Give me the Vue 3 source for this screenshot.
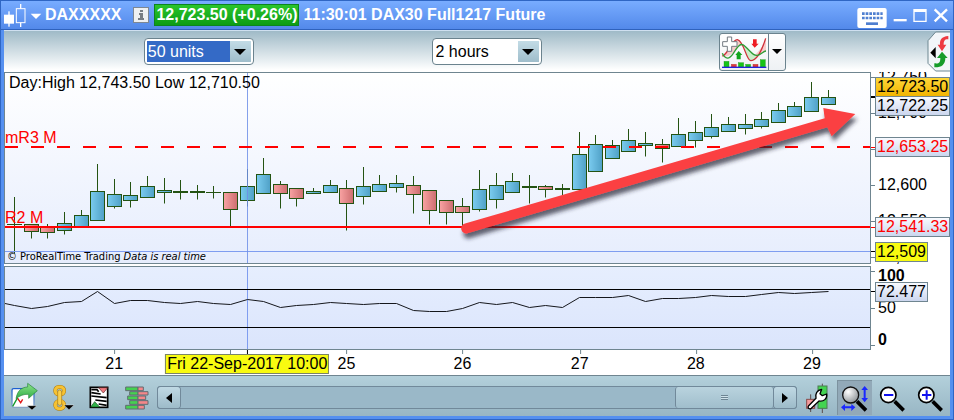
<script setup>
import { ref } from 'vue'

const units = ref('50 units')
const timeframe = ref('2 hours')
const scroll = ref(100)

// Plot geometry: both panels share one horizontal axis.
const PLOT_LEFT = 5
const PLOT_WIDTH = 865
const AXIS_TOP = 72
const RSI_TOP = 266

const priceY = (price) => 77 + (12750 - price) * 0.72
const left = (x) => `${((x - PLOT_LEFT) / PLOT_WIDTH) * 100}%`

// x, high, body top, body bottom, low, direction
const candles = [
  [14, 197, 224, 224, 253, 'up'],
  [31, 224, 224, 231, 238, 'down'],
  [47, 224, 227, 232, 238, 'down'],
  [64, 212, 223, 230, 234, 'up'],
  [81, 210, 215, 226, 226, 'up'],
  [97, 164, 191, 220, 220, 'up'],
  [114, 179, 194, 206, 208, 'up'],
  [130, 182, 195, 200, 207, 'up'],
  [147, 176, 186, 197, 197, 'up'],
  [164, 178, 190, 192, 203, 'up'],
  [180, 180, 191, 192, 199, 'up'],
  [197, 185, 191, 192, 199, 'up'],
  [213, 186, 192, 192, 198, 'up'],
  [230, 192, 192, 209, 226, 'down'],
  [247, 169, 186, 200, 206, 'up'],
  [263, 158, 174, 193, 193, 'up'],
  [280, 181, 184, 193, 208, 'down'],
  [296, 188, 188, 198, 206, 'down'],
  [313, 188, 191, 193, 193, 'up'],
  [330, 180, 185, 192, 192, 'up'],
  [346, 180, 188, 203, 230, 'down'],
  [363, 167, 186, 196, 204, 'up'],
  [379, 175, 184, 191, 191, 'up'],
  [396, 175, 183, 187, 192, 'up'],
  [413, 176, 185, 194, 213, 'down'],
  [429, 190, 190, 210, 224, 'down'],
  [446, 200, 200, 212, 224, 'down'],
  [462, 198, 206, 212, 226, 'down'],
  [479, 170, 189, 209, 211, 'up'],
  [496, 173, 185, 199, 208, 'up'],
  [512, 173, 181, 192, 192, 'up'],
  [529, 175, 186, 187, 203, 'up'],
  [545, 185, 186, 189, 197, 'down'],
  [562, 184, 188, 189, 195, 'up'],
  [579, 132, 154, 189, 189, 'up'],
  [595, 135, 144, 171, 171, 'up'],
  [612, 140, 145, 158, 158, 'up'],
  [628, 129, 140, 151, 151, 'up'],
  [645, 132, 143, 145, 156, 'up'],
  [662, 139, 144, 148, 162, 'down'],
  [678, 118, 134, 146, 146, 'up'],
  [695, 121, 132, 140, 147, 'up'],
  [711, 114, 127, 136, 138, 'up'],
  [728, 117, 124, 131, 131, 'up'],
  [745, 114, 124, 128, 134, 'up'],
  [761, 112, 119, 126, 128, 'up'],
  [778, 103, 110, 122, 122, 'up'],
  [794, 102, 106, 116, 116, 'up'],
  [811, 82, 97, 111, 111, 'up'],
  [828, 90, 97, 104, 104, 'up'],
].map(([x, high, top, bottom, low, dir]) => ({ x, high, top, bottom, low, dir }))

const rsi = [
  303, 305, 308, 306, 302, 301, 291, 303, 300, 300, 302, 303, 301, 303, 304, 299, 301, 307, 305,
  304, 302, 303, 304, 303, 303, 310, 311, 311, 308, 302, 304, 302, 307, 305, 307, 297, 297, 297,
  295, 301, 298, 298, 297, 295, 296, 296, 294, 292, 293, 292, 291,
]
const rsiPoints = rsi
  .map((y, i) => `${i === 0 ? 5 : candles[i - 1].x + 0.5},${y + 0.5}`)
  .join(' ')

const priceTicks = [12750, 12700, 12650, 12600, 12550, 12500]
const priceTags = [
  { text: '12,722.25', y: 106, kind: 'pale' },
  { text: '12,723.50', y: 87, kind: 'gold' },
  { text: '12,653.25', y: 147, kind: 'pale level' },
  { text: '12,541.33', y: 227, kind: 'pale level' },
  { text: '12,509', y: 252, kind: 'yellow' },
]
const dates = [
  { text: '21', x: 114 },
  { text: '', x: 230 },
  { text: '25', x: 346 },
  { text: '26', x: 462 },
  { text: '27', x: 579 },
  { text: '28', x: 695 },
  { text: '29', x: 811 },
]
</script>

<template>
  <main class="window">
    <header class="titlebar">
      <button class="plain" aria-label="Chart type">
        <svg width="38" height="28" viewBox="12 3 114 84">
          <g fill="#fff">
            <rect x="12" y="44" width="30" height="27" />
            <rect x="25" y="34" width="4" height="46" />
            <rect x="60" y="12" width="4" height="14" />
            <rect x="60" y="68" width="4" height="13" />
            <path d="M92 41H124L108 57Z" />
          </g>
          <rect x="49" y="26" width="26" height="42" fill="none" stroke="#fff" stroke-width="3" />
        </svg>
      </button>
      <h1 class="symbol">DAXXXXX</h1>
      <button class="info" aria-label="Information">
        <svg width="14" height="14" viewBox="0 0 14 14">
          <path d="M6 2h3v2H6zM5 5h4v5h1v2H4v-2h2V7H5z" fill="#777d84" />
        </svg>
      </button>
      <span class="quote">12,723.50 (+0.26%)</span>
      <span class="instrument">11:30:01 DAX30 Full1217 Future</span>
      <div class="controls">
        <button class="plain keyboard" aria-label="Keyboard">
          <svg width="30" height="28" viewBox="651 3 90 84">
            <rect x="652" y="24" width="88" height="60" rx="6" fill="#fff" />
            <path
              d="M666 41H728M666 54H728"
              stroke="#4f7fd0"
              stroke-width="8"
              stroke-dasharray="8 3"
            />
            <rect x="678" y="67" width="36" height="8" fill="#4f7fd0" />
          </svg>
        </button>
        <button class="plain" aria-label="Minimize">
          <svg width="17" height="28" viewBox="756 3 51 84">
            <rect x="761" y="57" width="39" height="7" fill="#fff" />
          </svg>
        </button>
        <button class="plain" aria-label="Maximize">
          <svg width="19" height="28" viewBox="813 3 57 84">
            <path
              fill="#fff"
              fill-rule="evenodd"
              d="M820 27H860V66H820ZM824 36V62H856V36Z"
            />
          </svg>
        </button>
        <button class="plain" aria-label="Close">
          <svg width="17" height="28" viewBox="873 3 51 84">
            <path d="M881 28L918 64M918 28L881 64" stroke="#fff" stroke-width="7" />
          </svg>
        </button>
      </div>
    </header>

    <section class="toolbar">
      <div class="combo focused first">
        <select v-model="units" aria-label="Units">
          <option>50 units</option>
          <option>100 units</option>
        </select>
        <span class="drop"><svg width="12" height="6" viewBox="0 0 12 6"><path d="M0 0H12L6 6Z" /></svg></span>
      </div>
      <div class="combo second">
        <select v-model="timeframe" aria-label="Timeframe">
          <option>2 hours</option>
          <option>4 hours</option>
        </select>
        <span class="drop"><svg width="12" height="6" viewBox="0 0 12 6"><path d="M0 0H12L6 6Z" /></svg></span>
      </div>
      <div class="split third">
        <button aria-label="Add indicator">
          <svg width="48" height="36" viewBox="240 98 144 108">
            <path d="M248 164C262 150 276 114 292 115C312 118 318 172 332 178C354 178 366 140 378 111V148C366 154 358 164 344 162C330 158 316 128 306 130C288 138 270 174 248 160Z" fill="#c9eec9" />
            <path d="M248 164C262 152 276 114 292 115L306 128C288 138 270 174 248 164ZM344 162C362 144 370 130 378 111V148C366 154 358 164 344 162Z" fill="#f7cccc" />
            <path d="M247 164C264 160 276 114 292 115C312 118 318 176 332 178C354 178 368 140 377 111" fill="none" stroke="#d02f3a" stroke-width="4" />
            <path d="M247 156C256 176 268 174 280 156C292 136 302 122 314 134C334 152 340 164 352 162C364 160 368 150 378 149" fill="none" stroke="#2f9c35" stroke-width="4" />
            <path d="M262 107H275V121H291V135H275V150H262V135H248V121H262Z" fill="#fff" stroke="#747b82" stroke-width="3" />
            <path d="M339 114H350V127H356L344 139L334 127H339Z" fill="#ee1c24" />
            <path d="M296 149L307 161H302V174H290V161H286Z" fill="#12a51c" />
            <g fill="#16c416" stroke="#168a16" stroke-width="1">
              <rect x="252" y="180" width="15" height="17" />
              <rect x="295" y="184" width="16" height="13" />
              <rect x="317" y="189" width="15" height="8" />
              <rect x="361" y="175" width="15" height="22" />
            </g>
            <g fill="#e03a3a" stroke="#a41818" stroke-width="1">
              <rect x="274" y="189" width="15" height="8" />
              <rect x="339" y="189" width="15" height="8" />
            </g>
            <rect x="246" y="196" width="133" height="4" fill="#2222dd" />
          </svg>
        </button>
        <button class="more" aria-label="More indicators">
          <svg width="10" height="6" viewBox="0 0 10 6"><path d="M0 0H10L5 5Z" /></svg>
        </button>
      </div>
      <button class="plain tab" aria-label="Order panel">
        <svg width="23" height="41" viewBox="861 93 69 123">
          <path d="M932 96H887L864 122V190L887 213H932Z" fill="#f2f6f9" stroke="#6f8892" stroke-width="3" />
          <path d="M871 158L887 141V175Z" />
          <path d="M925 108C904 110 899 119 900 134H893L906 154L919 134H911C911 123 914 117 925 118Z" fill="#ee3b42" />
          <path d="M883 202C903 203 916 195 916 174H923L906 155L891 174H901C901 188 897 192 883 190Z" fill="#169c2a" />
        </svg>
      </button>
    </section>

    <section class="charts">
      <div class="panel price">
        <svg class="plot" height="190" viewBox="5 73 865 190" preserveAspectRatio="none">
          <defs>
            <linearGradient id="up">
              <stop offset="0" stop-color="#7bccf0" />
              <stop offset="1" stop-color="#4fa0c6" />
            </linearGradient>
            <linearGradient id="down">
              <stop offset="0" stop-color="#f9a3a3" />
              <stop offset="1" stop-color="#cc6d6f" />
            </linearGradient>
            <filter id="shade" x="-5%" y="-10%" width="110%" height="130%">
              <feDropShadow dx="2" dy="5" stdDeviation="2" flood-color="#223" flood-opacity="0.7" />
            </filter>
          </defs>
          <g stroke="#245312">
            <g v-for="c in candles" :key="c.x">
              <path :d="`M${c.x + 0.5} ${c.high}V${c.low + 0.5}`" />
              <path v-if="c.bottom - c.top < 1" :d="`M${c.x - 7} ${c.top + 0.5}H${c.x + 8}`" />
              <rect
                v-else
                :x="c.x - 6.5"
                :y="c.top + 0.5"
                width="14"
                :height="c.bottom - c.top"
                :fill="`url(#${c.dir})`"
              />
            </g>
          </g>
          <path d="M5 251.5H870" stroke="#7f9df0" />
          <path d="M247.5 73V263" stroke="#6f8fe8" stroke-opacity="0.85" />
          <path d="M5 147H870" stroke="#f00" stroke-width="2" stroke-dasharray="13 13" />
          <path d="M5 227H870" stroke="#f00" stroke-width="2" />
          <path
            d="M465 223.500L824.700 118.300L823.300 108L855.300 114L831.700 136.300L827.300 127.300L467.500 233.300A5 5 0 0 1 465 223.500Z"
            fill="#fb4143"
            filter="url(#shade)"
          />
        </svg>
        <p class="range">Day:High 12,743.50 Low 12,710.50</p>
        <span class="level-name upper">mR3 M</span>
        <span class="level-name lower">R2 M</span>
        <p class="credit">© ProRealTime Trading <i>Data is real time</i></p>
      </div>
      <div class="axis">
        <svg class="ticks" width="5" height="190" viewBox="870 73 5 190">
          <path v-for="t in priceTicks" :key="t" :d="`M870 ${priceY(t) + 0.5}h4`" stroke="#6b828d" />
          <path d="M870 97h5" stroke="#000" stroke-width="2" />
          <path d="M870 147.500h5M870 227.500h5" stroke="#f00" />
          <path d="M870 251.500h5" stroke="#000" />
        </svg>
        <span
          v-for="t in priceTicks"
          :key="t"
          class="mark"
          :style="{ top: `${priceY(t) - AXIS_TOP}px` }"
        >{{ t.toLocaleString('en-US') }}</span>
        <span
          v-for="t in priceTags"
          :key="t.text"
          class="tag"
          :class="t.kind"
          :style="{ top: `${t.y - AXIS_TOP}px` }"
        >{{ t.text }}</span>
      </div>

      <div class="panel rsi">
        <svg class="plot" height="82" viewBox="5 267 865 82" preserveAspectRatio="none">
          <path d="M247.500 267V349" stroke="#7f9df0" />
          <path d="M5 289.500H870M5 327.500H870" stroke="#000" />
          <polyline :points="rsiPoints" fill="none" stroke="#15171c" />
        </svg>
      </div>
      <div class="axis">
        <svg class="ticks" width="5" height="82" viewBox="870 267 5 82">
          <path d="M870 271.500h4M870 308.500h4M870 345.500h4" stroke="#6b828d" />
          <path d="M870 291.500h5" stroke="#000" />
        </svg>
        <b class="mark" :style="{ top: `${276 - RSI_TOP}px` }">100</b>
        <span class="mark" :style="{ top: `${308 - RSI_TOP}px` }">50</span>
        <b class="mark" :style="{ top: `${340 - RSI_TOP}px` }">0</b>
        <span class="tag pale" :style="{ top: `${292 - RSI_TOP}px` }">72.477</span>
      </div>

      <div class="dates">
        <span v-for="d in dates" :key="d.x" class="date" :style="{ left: left(d.x) }">{{ d.text }}</span>
        <span class="date cursor" :style="{ left: left(247) }"><time>Fri 22-Sep-2017 10:00</time></span>
      </div>
    </section>

    <footer class="bottombar">
      <div class="tools">
        <button class="plain" aria-label="Export chart">
          <svg width="28" height="35" viewBox="30 360 84 105">
            <defs>
              <linearGradient id="frame" x2="0" y2="1">
                <stop offset="0" stop-color="#1c5fd0" />
                <stop offset="1" stop-color="#8aa5c6" />
              </linearGradient>
              <linearGradient id="share" x2="0" y2="1">
                <stop offset="0" stop-color="#8fe38b" />
                <stop offset="1" stop-color="#2fae46" />
              </linearGradient>
            </defs>
            <rect x="36" y="386" width="66" height="56" rx="5" fill="#fff" stroke="url(#frame)" stroke-width="4" />
            <path d="M38 439L53 413" fill="none" stroke="#119a2a" stroke-width="4" />
            <path d="M53 415L62 428L68 418" fill="none" stroke="#e01818" stroke-width="4" />
            <path d="M48 416C52 394 62 382 83 381V370L112 392L86 415V403C70 402 60 407 48 416Z" fill="url(#share)" stroke="#24833a" stroke-width="2" />
            <path d="M81 437H110L96 450Z" stroke="#fff" stroke-width="1" />
          </svg>
        </button>
        <button class="plain" aria-label="Link windows">
          <svg width="22" height="35" viewBox="158 360 66 105">
            <g fill="none" stroke="#a87a14" stroke-width="12">
              <rect x="168" y="381" width="26" height="22" rx="10" />
              <rect x="168" y="424" width="26" height="22" rx="10" />
            </g>
            <g fill="none" stroke="#f6c233" stroke-width="9">
              <rect x="168" y="381" width="26" height="22" rx="10" />
              <rect x="168" y="424" width="26" height="22" rx="10" />
            </g>
            <rect x="175" y="390" width="12" height="46" rx="6" fill="#f9d050" stroke="#a87a14" stroke-width="2" />
            <path d="M194 435H224L209 449Z" stroke="#fff" stroke-width="1" />
          </svg>
        </button>
        <button class="plain" aria-label="Order list">
          <svg width="22" height="35" viewBox="262 360 66 105">
            <rect x="269" y="382" width="52" height="60" fill="#fff" stroke="#000" stroke-width="5" />
            <path d="M294 383H321L308 399Z" fill="#f07a80" stroke="#5a2525" stroke-width="2" />
            <path d="M270 441L282 425L297 441Z" fill="#30b34a" stroke="#145020" stroke-width="2" />
            <path d="M272 389H289L294 395M272 398L300 402M272 408L318 413M284 420L318 424M294 432L318 436" fill="none" stroke="#000" stroke-width="5" />
          </svg>
        </button>
        <button class="plain" aria-label="Order book">
          <svg width="26" height="35" viewBox="372 360 78 105">
            <g stroke="#626b72" stroke-width="3">
              <path fill="#45d150" d="M377 381H414V392H377ZM389 395H414V405H389ZM383 408H414V419H383ZM389 422H414V433H389ZM377 436H414V447H377Z" />
              <path fill="#f4878a" d="M414 381H430V392H414ZM414 395H444V405H414ZM414 408H437V419H414ZM414 422H444V433H414ZM414 436H433V447H414Z" />
            </g>
          </svg>
        </button>
      </div>
      <div class="scrollbar">
        <button aria-label="Scroll left">
          <svg width="6" height="10" viewBox="0 0 6 10"><path d="M6 0V10L0 5Z" /></svg>
        </button>
        <input v-model="scroll" type="range" min="0" max="100" aria-label="Chart position" />
        <button aria-label="Scroll right">
          <svg width="6" height="10" viewBox="0 0 6 10"><path d="M0 0V10L6 5Z" /></svg>
        </button>
      </div>
      <div class="zooms">
        <button class="plain" aria-label="Chart settings">
          <svg width="26" height="35" viewBox="491 360 78 105">
            <path d="M546 371V459M511 403V456" stroke="#5b4c4c" stroke-width="3" />
            <rect x="533" y="378" width="27" height="67" fill="#43d451" stroke="#4b7a51" stroke-width="3" />
            <rect x="499" y="418" width="24" height="27" fill="#f59a9c" stroke="#874b4b" stroke-width="3" />
            <path d="M505 437L527 415C524 401 530 390 544 388L539 401L546 407L559 402C561 416 550 426 536 423L513 445C506 449 500 443 505 437Z" fill="#fff" stroke="#000" stroke-width="4" stroke-linejoin="round" />
          </svg>
        </button>
        <button class="plain active" aria-label="Automatic zoom" aria-pressed="true">
          <svg width="35" height="35" viewBox="591 360 105 105">
            <defs>
              <radialGradient id="lens" cx="0.35" cy="0.3" r="0.75">
                <stop offset="0" stop-color="#fff" />
                <stop offset="1" stop-color="#8e9498" />
              </radialGradient>
            </defs>
            <path d="M651 424L678 451" stroke="#000" stroke-width="11" />
            <circle cx="632" cy="405" r="24" fill="url(#lens)" stroke="#111" stroke-width="4" />
            <g fill="#1a28ff">
              <path d="M674 378L684 390H677V414H684L674 427L664 414H671V390H664Z" />
              <path d="M603 442L615 432V439H634V432L646 442L634 453V445H615V453Z" />
            </g>
          </svg>
        </button>
        <button class="plain" aria-label="Zoom out">
          <svg width="26" height="35" viewBox="717 360 78 105">
            <path d="M764 424L791 451" stroke="#000" stroke-width="11" />
            <circle cx="745" cy="405" r="23" fill="#fff" stroke="#000" stroke-width="5" />
            <path d="M732 405H760" stroke="#1010f0" stroke-width="6" />
          </svg>
        </button>
        <button class="plain" aria-label="Zoom in">
          <svg width="26" height="35" viewBox="831 360 78 105">
            <path d="M878 424L905 451" stroke="#000" stroke-width="11" />
            <circle cx="859" cy="405" r="23" fill="#fff" stroke="#000" stroke-width="5" />
            <path d="M846 405H874M860 391V419" stroke="#1010f0" stroke-width="6" />
          </svg>
        </button>
      </div>
    </footer>
  </main>
</template>

<style>
body {
  margin: 0;
}
</style>

<style scoped>
* {
  box-sizing: border-box;
}
.window {
  display: flex;
  flex-direction: column;
  padding: 0 3px 3px;
  border: 1px solid #2f66c4;
  background: #5590f0;
  font: 16px/18px "Liberation Sans", Arial, sans-serif;
  color: #000;
}
button {
  display: flex;
  align-items: center;
  justify-content: center;
  padding: 0;
  border: 0;
  font: inherit;
  cursor: pointer;
}
.plain {
  background: none;
}
svg {
  display: block;
}
h1,
p {
  margin: 0;
}

.titlebar {
  display: flex;
  align-items: center;
  height: 29px;
  margin: 0 -3px;
  padding: 0 4px 0 3px;
  border-bottom: 1px solid #2f62bd;
  background: linear-gradient(#78acff, #5389ea);
  color: #fff;
  font-weight: bold;
  white-space: nowrap;
}
.symbol {
  margin: 0 12px 0 3px;
  font-size: 16px;
}
.info {
  width: 16px;
  height: 16px;
  margin-right: 5px;
  border: 1px solid #7d8794;
  background: #eef0f2;
}
.quote {
  margin-right: 4px;
  padding: 1px;
  border: 1px solid #0d8420;
  background: linear-gradient(#2ac52c, #0d9c15);
}
.controls {
  display: flex;
  gap: 2px;
  margin-left: auto;
}
.keyboard {
  margin-right: 3px;
}

.toolbar {
  display: grid;
  grid-template-columns: 140fr auto 178fr auto 178fr auto 141fr auto;
  align-items: center;
  height: 42px;
  border-top: 1px solid #cfe0f0;
  background: linear-gradient(#9fbac7, #fff 95%);
}
.first {
  grid-column: 2;
}
.second {
  grid-column: 4;
}
.third {
  grid-column: 6;
}
.tab {
  grid-column: 8;
}
.combo {
  display: grid;
  grid-template-columns: 83px 21px;
  height: 27px;
  padding: 2px;
  border: 1px solid #6b838e;
  border-radius: 4px;
  background: #fff;
}
.combo select {
  grid-area: 1 / 1 / 2 / 3;
  appearance: none;
  height: 21px;
  padding: 0 22px 0 1px;
  border: 0;
  outline: 0;
  background: #fff;
  color: #000;
  font: inherit;
}
.combo.focused select {
  background: #346ac6;
  color: #fff;
}
.drop {
  display: grid;
  grid-area: 1 / 2 / 2 / 3;
  place-items: center;
  background: linear-gradient(#c3dce6, #9fbdcb);
  pointer-events: none;
}
.split {
  display: flex;
  height: 38px;
  border: 1px solid #6b838e;
  border-radius: 3px;
  background: linear-gradient(#fff, #eef1f4);
  overflow: hidden;
}
.split button {
  background: none;
}
.split .more {
  width: 17px;
  border-left: 1px solid #6b838e;
}

.charts {
  display: grid;
  grid-template-columns: 1fr 79px;
  background: #fff;
}
.panel {
  position: relative;
  border: 1px solid #6f8590;
  overflow: hidden;
}
.price {
  margin-bottom: 2px;
  background: linear-gradient(#fff, #e6edfd);
}
.rsi {
  background: linear-gradient(#e6eefe, #dbe5fc);
}
.plot {
  width: 100%;
}
.range,
.level-name,
.credit {
  position: absolute;
  left: 4px;
  white-space: nowrap;
}
.range {
  top: 1px;
}
.level-name {
  left: 0;
  color: #f00;
}
.upper {
  top: 56px;
}
.lower {
  top: 136px;
}
.credit {
  bottom: 0;
  left: 2px;
  font: 11px/12px "DejaVu Sans Condensed", "Noto Sans", sans-serif;
}
.axis {
  position: relative;
  overflow: hidden;
}
.ticks {
  margin-top: 1px;
}
.mark,
.tag {
  position: absolute;
  left: 7px;
  transform: translateY(-50%);
}
.tag {
  left: 4px;
  padding: 0 1px;
  border: 1px solid #6f8590;
}
.gold {
  background: linear-gradient(#ffd83a, #f2b400);
}
.pale {
  background: linear-gradient(#f8faff, #cbd6ee);
}
.level {
  color: #f00;
}
.yellow {
  background: #f8fb10;
}
.dates {
  position: relative;
  height: 25px;
  margin-left: 1px;
}
.date {
  position: absolute;
  top: 0;
  padding-top: 5px;
  transform: translateX(-50%);
  white-space: nowrap;
}
.date::before {
  content: "";
  position: absolute;
  top: 0;
  left: 50%;
  height: 4px;
  border-left: 1px solid #6f8590;
}
.cursor::before {
  border-color: #000;
}
.cursor {
  padding-top: 4px;
}
.cursor time {
  display: block;
  padding: 0 1px;
  border: 1px solid #7a8468;
  background: #f8fb10;
}

.bottombar {
  display: flex;
  align-items: center;
  padding: 4px 2px 1px 6px;
  border-top: 1px solid #6f8590;
  background: linear-gradient(#b3d0db, #98b6c4);
}
.tools {
  display: flex;
  gap: 14px;
  margin-right: 7px;
}
.scrollbar {
  display: flex;
  flex: 1;
  height: 23px;
  border: 1px solid #71899a;
  border-radius: 3px;
  background: #9ab8c8;
}
.scrollbar button {
  width: 22px;
  border-radius: 3px;
  background: linear-gradient(#c0d9e4, #9dbbc9);
  box-shadow: 0 0 0 1px #71899a;
}
.scrollbar input {
  flex: 1;
  min-width: 0;
  height: 21px;
  margin: 0;
  appearance: none;
  background: none;
}
.scrollbar input::-webkit-slider-thumb {
  appearance: none;
  width: 99px;
  height: 21px;
  border: 1px solid #71899a;
  border-width: 0 1px;
  border-radius: 3px;
  background:
    repeating-linear-gradient(#6d8593 0 1px, #cfe2ea 1px 2px) center / 7px 5px no-repeat,
    linear-gradient(#b9d3de, #a0becc);
}
.zooms {
  display: flex;
  gap: 2px;
  margin-left: 2px;
}
.zooms button {
  width: 36px;
}
.zooms .active {
  width: 35px;
  background: #92a9b8;
  box-shadow: inset 1px 1px #7c929f;
}
</style>
